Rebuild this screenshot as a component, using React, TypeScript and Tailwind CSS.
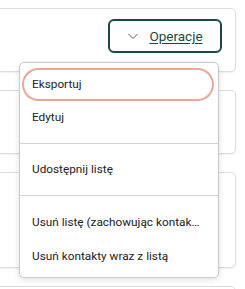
import React from 'react';

const MenuItem: React.FC<{ label: string; focused?: boolean }> = ({ label, focused = false }) => (
    <div
        className={`ml-[2px] mr-[4px] h-[33px] flex items-center pl-[10px] pr-1 text-[11.8px] text-[#222] whitespace-nowrap ${
            focused ? 'rounded-full ring-2 ring-inset ring-[#eaa698]' : ''
        }`}
    >
        <span>{label}</span>
    </div>
);

const Divider = () => <div className="my-[9px] h-px bg-[#d4d4d4]" />;

const Card: React.FC<{ height: string; children?: React.ReactNode }> = ({ height, children }) => (
    <div className={`-ml-4 ${height} rounded-[5px] border border-[#dcdcdc] bg-white shadow-[0_1px_2px_rgba(0,0,0,0.06)]`}>
        {children}
    </div>
);

const App: React.FC = () => {
    return (
        <div className="relative w-[245px] h-[289px] overflow-hidden bg-white" style={{ fontFamily: 'Roboto, "Liberation Sans", sans-serif' }}>
            <div className="flex flex-col gap-[18px] pt-[8px] pr-[9px]">
                <Card height="h-[64px]">
                    <div className="flex justify-end pt-[10px] pr-[13px]">
                        <button className="w-[114px] h-[34px] flex items-center justify-center gap-[10px] rounded-[6px] border-2 border-[#1e4742] text-[#1e4742]">
                            <svg className="w-[12px] h-[12px]" viewBox="0 0 12 12" fill="none" stroke="#4d5c5a" strokeWidth={1}>
                                <path d="M1.5 4l4.5 4.5L10.5 4" />
                            </svg>
                            <span className="text-[13.5px] underline underline-offset-2">Operacje</span>
                        </button>
                    </div>
                </Card>
                <Card height="h-[64px]" />
                <Card height="h-[96px]" />
                <Card height="h-[40px]" />
            </div>

            {/* dropdown */}
            <div className="absolute left-[19px] top-[62px] w-[200px] rounded-[5px] border border-[#c9c9c9] bg-white pt-[5px] pb-[4px] shadow-[0_2px_6px_rgba(0,0,0,0.12)]">
                <MenuItem label="Eksportuj" focused />
                <MenuItem label="Edytuj" />
                <Divider />
                <MenuItem label="Udostępnij listę" />
                <Divider />
                <div className="pt-px">
                    <MenuItem label="Usuń listę (zachowując kontak…" />
                    <div className="pt-px">
                        <MenuItem label="Usuń kontakty wraz z listą" />
                    </div>
                </div>
            </div>
        </div>
    );
};

export default App;
